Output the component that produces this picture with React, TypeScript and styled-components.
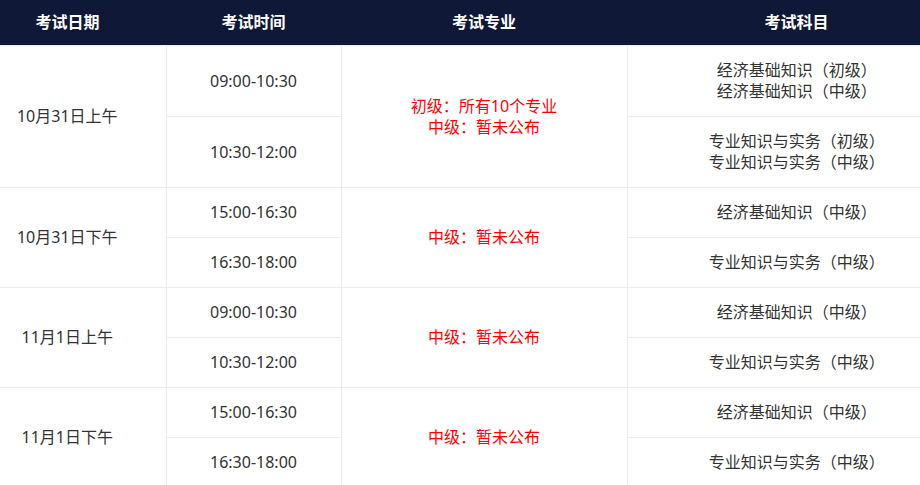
import React from 'react'
import styled, { createGlobalStyle } from 'styled-components'

const GlobalStyle = createGlobalStyle`
  html, body {
    margin: 0;
    padding: 0;
    background: #fff;
    overflow: hidden;
  }
  body {
    font-family: "Noto Sans", "Noto Sans CJK SC", sans-serif;
    text-spacing-trim: space-all;
  }
`

// the schedule table is wider than the window and sits scrolled a little to the right
const Table = styled.table`
  width: 997px;
  margin-left: -31px;
  border-collapse: collapse;
  table-layout: fixed;
  font-size: 16px;
  line-height: 21px;
  color: #333;
`

const HeadCell = styled.th`
  height: 45px;
  padding: 0;
  background: #0f1836;
  color: #fff;
  font-size: 16px;
  font-weight: bold;
  text-align: center;
  vertical-align: middle;
`

const Cell = styled.td<{ $red?: boolean; $tall?: boolean }>`
  height: ${(p) => (p.$tall ? '70px' : '49px')};
  padding: 0;
  border: 1px solid #ececec;
  text-align: center;
  vertical-align: middle;
  color: ${(p) => (p.$red ? '#ff0000' : '#333')};

  tr > &:first-child {
    border-left: none;
  }
  tr > &:last-child {
    border-right: none;
  }
`

type Slot = { time: string; subject: string[] }
type Group = { date: string; major: string[]; tall?: boolean; slots: Slot[] }

const groups: Group[] = [
  {
    date: '10月31日上午',
    major: ['初级：所有10个专业', '中级：暂未公布'],
    tall: true,
    slots: [
      { time: '09:00-10:30', subject: ['经济基础知识（初级）', '经济基础知识（中级）'] },
      { time: '10:30-12:00', subject: ['专业知识与实务（初级）', '专业知识与实务（中级）'] },
    ],
  },
  {
    date: '10月31日下午',
    major: ['中级：暂未公布'],
    slots: [
      { time: '15:00-16:30', subject: ['经济基础知识（中级）'] },
      { time: '16:30-18:00', subject: ['专业知识与实务（中级）'] },
    ],
  },
  {
    date: '11月1日上午',
    major: ['中级：暂未公布'],
    slots: [
      { time: '09:00-10:30', subject: ['经济基础知识（中级）'] },
      { time: '10:30-12:00', subject: ['专业知识与实务（中级）'] },
    ],
  },
  {
    date: '11月1日下午',
    major: ['中级：暂未公布'],
    slots: [
      { time: '15:00-16:30', subject: ['经济基础知识（中级）'] },
      { time: '16:30-18:00', subject: ['专业知识与实务（中级）'] },
    ],
  },
]

const Lines = ({ items }: { items: string[] }) => (
  <>
    {items.map((t, i) => (
      <React.Fragment key={i}>
        {i > 0 && <br />}
        {t}
      </React.Fragment>
    ))}
  </>
)

export default function App() {
  return (
    <>
      <GlobalStyle />
      <Table>
        <colgroup>
          <col style={{ width: 197 }} />
          <col style={{ width: 175 }} />
          <col style={{ width: 286 }} />
          <col style={{ width: 339 }} />
        </colgroup>
        <thead>
          <tr>
            <HeadCell>考试日期</HeadCell>
            <HeadCell>考试时间</HeadCell>
            <HeadCell>考试专业</HeadCell>
            <HeadCell>考试科目</HeadCell>
          </tr>
        </thead>
        <tbody>
          {groups.map((g) =>
            g.slots.map((s, i) => (
              <tr key={g.date + s.time}>
                {i === 0 && (
                  <Cell rowSpan={g.slots.length} $tall={g.tall}>
                    {g.date}
                  </Cell>
                )}
                <Cell $tall={g.tall}>{s.time}</Cell>
                {i === 0 && (
                  <Cell rowSpan={g.slots.length} $red $tall={g.tall}>
                    <Lines items={g.major} />
                  </Cell>
                )}
                <Cell $tall={g.tall}>
                  <Lines items={s.subject} />
                </Cell>
              </tr>
            ))
          )}
        </tbody>
      </Table>
    </>
  )
}
